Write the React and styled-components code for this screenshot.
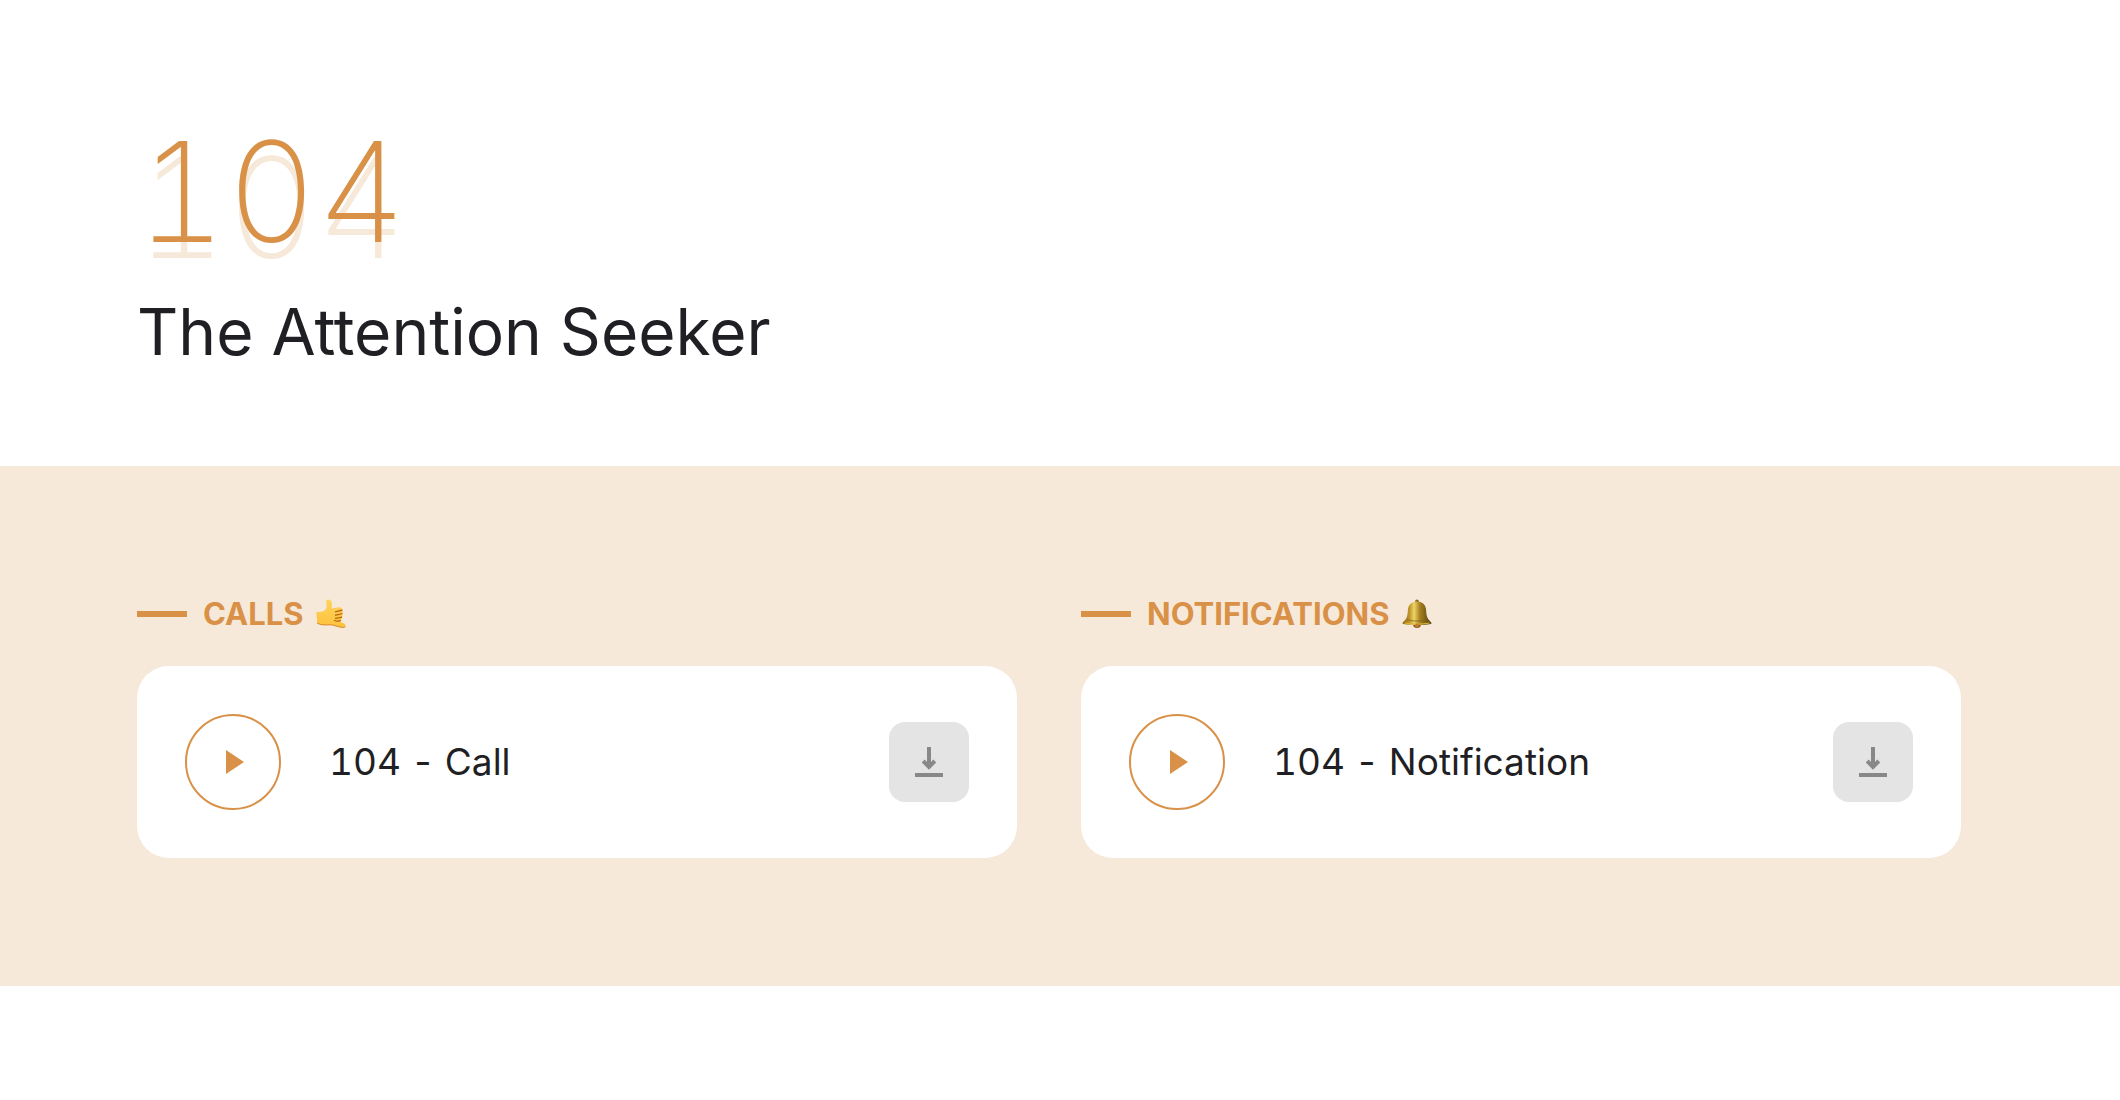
import React from 'react';
import styled, { createGlobalStyle } from 'styled-components';

const accent = '#d99148';
const tint = '#f6e9d9';
const ink = '#1f1f24';

const GlobalStyle = createGlobalStyle`
  body {
    margin: 0;
    background-color: #fff;
    color: ${ink};
    font-family: Inter, 'Liberation Sans', sans-serif;
  }

  * {
    box-sizing: border-box;
  }
`;

const Header = styled.header`
  padding: 96px 159px 94px 137px;
`;

const Title = styled.h1`
  margin: 0;
  font-size: 64px;
  font-weight: 400;
  line-height: 80px;
`;

const Number = styled.span`
  display: block;
  margin-bottom: 4px;
  color: ${accent};
  font-size: 139px;
  font-weight: 250;
  line-height: 192px;
  font-variant-numeric: tabular-nums;
  text-shadow: 0 16px 0 ${tint};
`;

const Sounds = styled.main`
  display: grid;
  grid-template-columns: 1fr 1fr;
  gap: 64px;
  padding: 128px 159px 128px 137px;
  background-color: ${tint};
`;

const Heading = styled.h2`
  display: flex;
  align-items: center;
  gap: 12px;
  margin: 0 0 32px;
  color: ${accent};
  font-size: 31px;
  font-weight: 700;
  line-height: 40px;
  text-transform: uppercase;

  &::before {
    content: '';
    width: 50px;
    height: 6px;
    margin-right: 4px;
    background-color: ${accent};
  }
`;

const Emoji = styled.svg`
  width: 30px;
  height: 30px;
`;

const Card = styled.div`
  display: flex;
  align-items: center;
  gap: 48px;
  padding: 48px;
  border-radius: 32px;
  background-color: #fff;
`;

const PlayButton = styled.button`
  display: flex;
  align-items: center;
  justify-content: center;
  width: 96px;
  height: 96px;
  padding: 0;
  border: 2px solid ${accent};
  border-radius: 50%;
  background: none;
  color: ${accent};
  cursor: pointer;
`;

const Name = styled.span`
  flex: 1;
  font-size: 37px;
  line-height: 48px;
  font-variant-numeric: tabular-nums;
  font-variant-ligatures: no-contextual;
`;

const DownloadLink = styled.a`
  display: flex;
  align-items: center;
  justify-content: center;
  width: 80px;
  height: 80px;
  border-radius: 16px;
  background-color: #e4e4e4;
  color: #888;
`;

const CallEmoji = () => (
  <Emoji viewBox="0 0 30 30" role="img" aria-label="call me hand">
    <defs>
      <linearGradient id="skin" x1="0" y1="0" x2="0" y2="1">
        <stop offset="0" stopColor="#ffd35c" />
        <stop offset="1" stopColor="#fcc23c" />
      </linearGradient>
    </defs>
    <path
      d="M.3 13C3 13.300 6 13 8.500 11.500C10.500 10 11.300 7.500 10.300 4C9.700 1.500 10.500.500 12.200.600C14.700.700 15.700 2.500 16 5C16.100 7 15.600 8.300 15.700 9.600L22.500 8.200C25 8 26.500 9.200 26 11C26.900 11.900 26.900 13.200 26.200 14.300C26.900 15.600 26.700 17 25.900 18C26.300 19.500 25.900 20.700 24.700 21.500L22.500 22L28.700 24.800C30 25.700 29.600 28.600 27.300 28.500C24 28.200 20 27 16.500 26C12 25.300 7 27 1.200 24.200Z"
      fill="url(#skin)"
    />
    <path
      d="M1.200 24.200C7 27 12 25.300 16.500 26C20 27 24 28.200 27.300 28.500C28.500 28.500 29 28 29.200 27.400"
      fill="none"
      stroke="#db8520"
      strokeWidth="1"
    />
    <path
      d="M19.500 12.800C22 11.700 24 12 26 11.100M19.500 16.200C22 15.200 24 15.400 26 14.500M19.500 19.400C22 18.700 24 18.900 25.700 18.200M18.500 21.500C20.500 22.300 22.500 22.300 24.500 21.600"
      fill="none"
      stroke="#b9640f"
      strokeWidth="1.300"
      strokeLinecap="round"
    />
  </Emoji>
);

const BellEmoji = () => (
  <Emoji viewBox="0 0 30 30" role="img" aria-label="bell">
    <defs>
      <linearGradient id="brass" x1="0" y1="0" x2="1" y2="0">
        <stop offset="0" stopColor="#8a6415" />
        <stop offset=".25" stopColor="#c3982a" />
        <stop offset=".4" stopColor="#ecd468" />
        <stop offset=".6" stopColor="#a98020" />
        <stop offset="1" stopColor="#504010" />
      </linearGradient>
    </defs>
    <circle cx="15" cy="2.400" r="1.900" fill="#8a6a1c" />
    <circle cx="15" cy="25" r="4" fill="#8d591a" />
    <path
      d="M15 2.500C20 2.500 23.500 5.500 24 10C24.400 14.500 24.300 17.500 26.500 20.500C28 22.500 29.500 23 29.500 24.500C26 26.700 4 26.700.500 24.500C.500 23 2 22.500 3.500 20.500C5.700 17.500 5.600 14.500 6 10C6.500 5.500 10 2.500 15 2.500Z"
      fill="url(#brass)"
    />
    <path
      d="M5 20.500C10 22.500 20 22.500 25 20.500"
      fill="none"
      stroke="#80631a"
      strokeWidth=".8"
    />
    <path
      d="M2.500 24C9 25.500 20 25.500 27.500 24"
      fill="none"
      stroke="#e0b63c"
      strokeWidth="1"
    />
    <circle cx="15" cy="26.500" r="2" fill="#c17a33" />
  </Emoji>
);

const PlayIcon = () => (
  <svg width="24" height="24" viewBox="0 0 24 24" aria-hidden="true">
    <path d="M5 0L23 12L5 24Z" fill="currentColor" />
  </svg>
);

const DownloadIcon = () => (
  <svg width="28" height="30" viewBox="0 0 28 30" aria-hidden="true">
    <path
      d="M14 0V19M8.200 14L14 19.800L19.800 14M0 28H28"
      fill="none"
      stroke="currentColor"
      strokeWidth="4"
    />
  </svg>
);

const Sound = ({ title, emoji, name }) => (
  <section>
    <Heading>
      {title}
      {emoji}
    </Heading>
    <Card>
      <PlayButton type="button" aria-label={`Play ${name}`}>
        <PlayIcon />
      </PlayButton>
      <Name>{name}</Name>
      <DownloadLink href="#download" aria-label={`Download ${name}`}>
        <DownloadIcon />
      </DownloadLink>
    </Card>
  </section>
);

const App = () => (
  <>
    <GlobalStyle />
    <Header>
      <Title>
        <Number>104</Number>
        The Attention Seeker
      </Title>
    </Header>
    <Sounds>
      <Sound title="Calls" emoji={<CallEmoji />} name="104 - Call" />
      <Sound
        title="Notifications"
        emoji={<BellEmoji />}
        name="104 - Notification"
      />
    </Sounds>
  </>
);

export default App;
